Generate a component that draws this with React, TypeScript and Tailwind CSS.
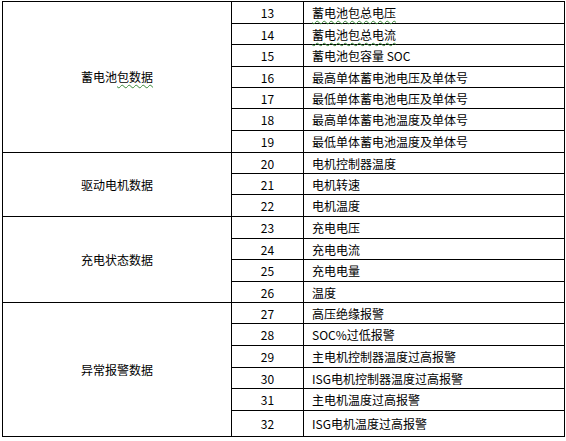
import React from 'react';

type Group = {
    name: string;
    wavy?: boolean;
    rows: { no: number; text: string; wavy?: boolean; h: number }[];
};

const groups: Group[] = [
    {
        name: '蓄电池包数据',
        wavy: true,
        rows: [
            { no: 13, text: '蓄电池包总电压', wavy: true, h: 22 },
            { no: 14, text: '蓄电池包总电流', wavy: true, h: 21 },
            { no: 15, text: '蓄电池包容量 SOC', h: 22 },
            { no: 16, text: '最高单体蓄电池电压及单体号', h: 21 },
            { no: 17, text: '最低单体蓄电池电压及单体号', h: 21 },
            { no: 18, text: '最高单体蓄电池温度及单体号', h: 22 },
            { no: 19, text: '最低单体蓄电池温度及单体号', h: 22 },
        ],
    },
    {
        name: '驱动电机数据',
        rows: [
            { no: 20, text: '电机控制器温度', h: 21 },
            { no: 21, text: '电机转速', h: 21 },
            { no: 22, text: '电机温度', h: 22 },
        ],
    },
    {
        name: '充电状态数据',
        rows: [
            { no: 23, text: '充电电压', h: 22 },
            { no: 24, text: '充电电流', h: 21 },
            { no: 25, text: '充电电量', h: 22 },
            { no: 26, text: '温度', h: 21 },
        ],
    },
    {
        name: '异常报警数据',
        rows: [
            { no: 27, text: '高压绝缘报警', h: 21 },
            { no: 28, text: 'SOC%过低报警', h: 22 },
            { no: 29, text: '主电机控制器温度过高报警', h: 22 },
            { no: 30, text: 'ISG电机控制器温度过高报警', h: 21 },
            { no: 31, text: '主电机温度过高报警', h: 22 },
            { no: 32, text: 'ISG电机温度过高报警', h: 26 },
        ],
    },
];

const wavyCls = 'underline decoration-wavy decoration-[#3a8a3a] decoration-1 underline-offset-2';

const App: React.FC = () => {
    return (
        <div className="w-[566px] h-[441px] bg-white pt-px pl-[2px] font-['SimSun','Noto_Sans_CJK_SC',sans-serif] text-[12px] leading-none text-black">
            <table className="border-collapse table-fixed w-[562px]">
                <colgroup>
                    <col className="w-[229px]" />
                    <col className="w-[72px]" />
                    <col className="w-[261px]" />
                </colgroup>
                <tbody>
                    {groups.map((g) =>
                        g.rows.map((r, i) => (
                            <tr key={r.no} style={{ height: r.h }}>
                                {i === 0 && (
                                    <td
                                        rowSpan={g.rows.length}
                                        className="border border-black text-center align-middle p-0"
                                    >
                                        <span className={g.wavy ? 'decoration-wavy' : ''}>
                                            {g.wavy ? (
                                                <>
                                                    蓄电池<span className={wavyCls}>包数据</span>
                                                </>
                                            ) : (
                                                g.name
                                            )}
                                        </span>
                                    </td>
                                )}
                                <td className="border border-black text-center align-middle p-0 pt-px">
                                    {r.no}
                                </td>
                                <td className="border border-black align-middle p-0 pl-2 pt-px">
                                    <span className={r.wavy ? wavyCls : ''}>{r.text}</span>
                                </td>
                            </tr>
                        ))
                    )}
                </tbody>
            </table>
        </div>
    );
};

export default App;
